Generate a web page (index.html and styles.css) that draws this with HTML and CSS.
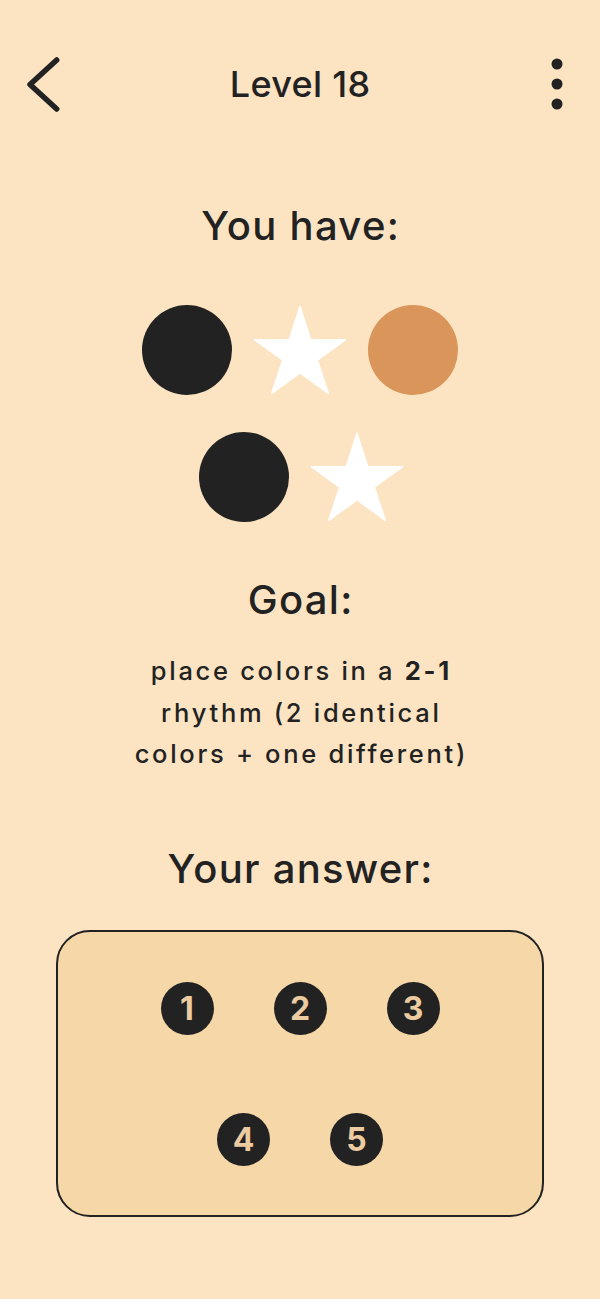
FILE: index.html
```html
<!DOCTYPE html>
<html lang="en">
<head>
    <meta charset="UTF-8">
    <meta name="viewport" content="width=device-width, initial-scale=1.0">
    <title>Level 18</title>
    <link rel="stylesheet" href="styles.css">
</head>
<body>
    <div class="header">
        <a href="#" class="back-button">
            <svg width="44" height="60" viewBox="0 0 44 60">
                <polyline points="36.7,6 10,30.5 36.7,55" fill="none" stroke="#222" stroke-width="5.5" stroke-linecap="round" stroke-linejoin="round"/>
            </svg>
        </a>
        <h1 class="title">Level 18</h1>
        <div class="menu-button">
            <svg width="44" height="60" viewBox="0 0 44 60">
                <circle cx="21" cy="10" r="5.5" fill="#222"/>
                <circle cx="21" cy="30" r="5.5" fill="#222"/>
                <circle cx="21" cy="50" r="5.5" fill="#222"/>
            </svg>
        </div>
    </div>

    <div class="container">
        <h2 class="section-title have-title">You have:</h2>
        <div class="shapes">
            <div class="shape-row">
                <div class="shape circle black"></div>
                <svg class="shape star" viewBox="0 0 90 90"><polygon points="45,1.5 55.76,34.7 90.65,34.67 62.41,55.15 73.21,88.33 45,67.8 16.79,88.33 27.59,55.15 -0.65,34.67 34.24,34.7"/></svg>
                <div class="shape circle orange"></div>
            </div>
            <div class="shape-row">
                <div class="shape circle black"></div>
                <svg class="shape star" viewBox="0 0 90 90"><polygon points="45,1.5 55.76,34.7 90.65,34.67 62.41,55.15 73.21,88.33 45,67.8 16.79,88.33 27.59,55.15 -0.65,34.67 34.24,34.7"/></svg>
            </div>
        </div>

        <h2 class="section-title goal-title">Goal:</h2>
        <p class="goal-text">place colors in a <b>2-1</b><br>rhythm (2 identical<br>colors + one different)</p>

        <h2 class="section-title answer-title">Your answer:</h2>
        <div class="answer-box">
            <div class="slot-row">
                <div class="slot">1</div>
                <div class="slot">2</div>
                <div class="slot">3</div>
            </div>
            <div class="slot-row">
                <div class="slot">4</div>
                <div class="slot">5</div>
            </div>
        </div>
    </div>
</body>
</html>
```

FILE: styles.css
```css
body, html {
    margin: 0;
    padding: 0;
    font-family: Inter, "Open Sans", sans-serif;
    background-color: #fce4c2;
    color: #222;
}

.header {
    display: grid;
    grid-template-columns: 1fr auto 1fr;
    align-items: center;
    height: 60px;
    padding: 54px 20px 0;
}

.back-button {
    display: flex;
    justify-self: start;
}

.menu-button {
    display: flex;
    justify-self: end;
}

.title {
    margin: 0;
    padding-left: 0.3px;
    font-size: 36px;
    font-weight: 500;
    line-height: 60px;
    letter-spacing: 0.3px;
}

.container {
    display: flex;
    flex-direction: column;
    align-items: center;
}

.section-title {
    margin: 0;
    padding-left: 1.3px;
    font-size: 40px;
    font-weight: 500;
    line-height: 48px;
    letter-spacing: 1.3px;
}

.have-title {
    margin-top: 88px;
}

.shapes {
    display: flex;
    flex-direction: column;
    align-items: center;
    gap: 37px;
    margin-top: 55px;
}

.shape-row {
    display: flex;
    gap: 23px;
}

.shape {
    width: 90px;
    height: 90px;
}

.circle {
    border-radius: 50%;
}

.black {
    background-color: #222;
}

.orange {
    background-color: #da965a;
}

.star {
    overflow: visible;
}

.star polygon {
    fill: #fff;
    stroke: #fff;
    stroke-width: 1.5;
    stroke-linejoin: round;
}

.goal-title {
    margin-top: 54px;
}

.goal-text {
    margin: 26px 0 0;
    padding-left: 2.7px;
    font-size: 25.5px;
    font-weight: 500;
    line-height: 41.5px;
    letter-spacing: 2.7px;
    text-align: center;
}

.goal-text b {
    font-weight: 700;
}

.answer-title {
    margin-top: 70px;
}

.answer-box {
    box-sizing: border-box;
    width: 488px;
    height: 287px;
    margin-top: 37px;
    padding: 50px 0;
    border: 2px solid #222;
    border-radius: 34px;
    background-color: #f5d7a8;
    display: flex;
    flex-direction: column;
    align-items: center;
    gap: 78px;
}

.slot-row {
    display: flex;
    gap: 60px;
}

.slot {
    width: 53px;
    height: 53px;
    border-radius: 50%;
    background-color: #222;
    color: #ebcb9f;
    font-size: 32px;
    font-weight: 700;
    display: flex;
    align-items: center;
    justify-content: center;
}
```
